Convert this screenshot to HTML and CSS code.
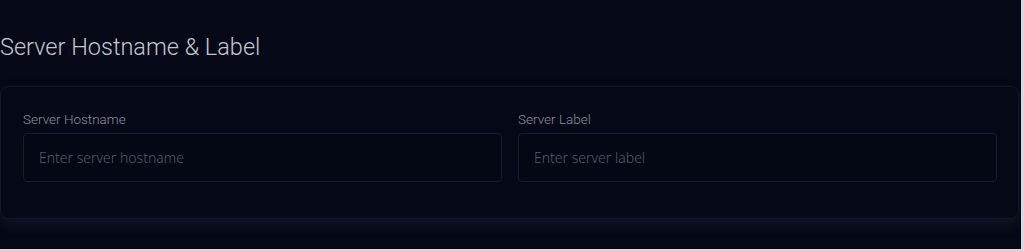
FILE: index.html
```html
<!DOCTYPE html>
<html lang="en">
<head>
<meta charset="UTF-8">
<meta name="viewport" content="width=device-width, initial-scale=1.0">
<title>Server Settings</title>
<link rel="stylesheet" href="styles.css">
</head>
<body>
<div class="page">
<h2 class="section-title">Server Hostname &amp; Label</h2>
<div class="card">
<div class="form-row">
<div class="form-group">
<label class="form-label" for="hostname">Server Hostname</label>
<input type="text" class="form-input" id="hostname" placeholder="Enter server hostname">
</div>
<div class="form-group">
<label class="form-label" for="label">Server Label</label>
<input type="text" class="form-input" id="label" placeholder="Enter server label">
</div>
</div>
</div>
</div>
</body>
</html>
```

FILE: styles.css
```css
html {
    background-color: #d6d9e0;
}
body {
    font-family: Roboto, 'Noto Sans', sans-serif;
    margin: 0;
    padding: 0;
}
.page {
    width: 1021px;
    height: 249px;
    background-color: #050816;
    overflow: hidden;
    box-sizing: border-box;
    padding-top: 33px;
}
.section-title {
    margin: 0 0 25px 0;
    font-size: 23.5px;
    font-weight: 300;
    line-height: 28px;
    color: #c3c7d0;
}
.card {
    width: 1019px;
    box-sizing: border-box;
    background-color: #050817;
    border: 1px solid #11172a;
    border-radius: 8px;
    padding: 24px 21px 36px 22px;
    box-shadow: 0 6px 14px rgba(40, 50, 80, 0.3);
}
.form-row {
    display: flex;
    gap: 16px;
}
.form-group {
    flex: 1;
    display: flex;
    flex-direction: column;
}
.form-label {
    font-size: 13.5px;
    font-weight: 300;
    color: #8b909c;
    line-height: 16px;
    margin-bottom: 6px;
}
.form-input {
    height: 49px;
    box-sizing: border-box;
    background-color: #040714;
    border: 1px solid #171d2e;
    border-radius: 4px;
    padding: 0 15px;
    font-family: 'Noto Sans', Roboto, sans-serif;
    font-size: 14px;
    color: #c3c7d0;
    outline: none;
}
.form-input::placeholder {
    color: #555b6a;
    font-weight: 300;
}
```
